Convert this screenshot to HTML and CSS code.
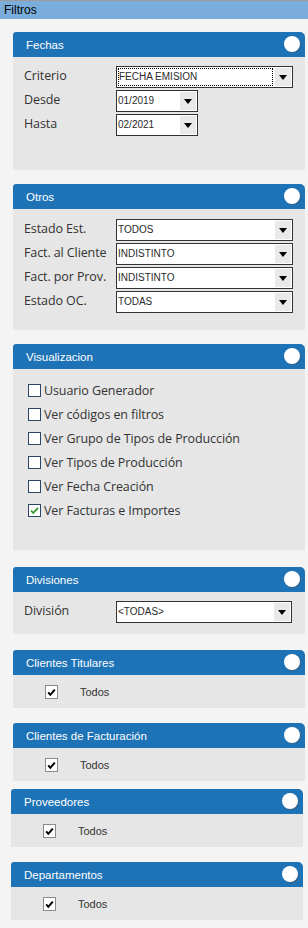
FILE: index.html
```html
<!DOCTYPE html>
<html lang="es">
<head>
<meta charset="utf-8">
<title>Filtros</title>
<link rel="stylesheet" href="styles.css">
</head>
<body>
<div class="titlebar">Filtros</div>
<div class="panel">

  <section class="box box--fechas">
    <div class="box-head"><span class="box-title">Fechas</span><span class="knob"></span></div>
    <div class="box-body body--fechas">
      <div class="row"><span class="lbl">Criterio</span><div class="sel sel--wide"><span class="sel-text sel-text--focus">FECHA EMISION</span><span class="sel-btn"><i class="tri"></i></span></div></div>
      <div class="row"><span class="lbl">Desde</span><div class="sel sel--short"><span class="sel-text">01/2019</span><span class="sel-btn"><i class="tri"></i></span></div></div>
      <div class="row"><span class="lbl">Hasta</span><div class="sel sel--short"><span class="sel-text">02/2021</span><span class="sel-btn"><i class="tri"></i></span></div></div>
    </div>
  </section>

  <section class="box box--otros">
    <div class="box-head"><span class="box-title">Otros</span><span class="knob"></span></div>
    <div class="box-body body--otros">
      <div class="row"><span class="lbl">Estado Est.</span><div class="sel sel--wide"><span class="sel-text">TODOS</span><span class="sel-btn"><i class="tri"></i></span></div></div>
      <div class="row"><span class="lbl">Fact. al Cliente</span><div class="sel sel--wide"><span class="sel-text">INDISTINTO</span><span class="sel-btn"><i class="tri"></i></span></div></div>
      <div class="row"><span class="lbl">Fact. por Prov.</span><div class="sel sel--wide"><span class="sel-text">INDISTINTO</span><span class="sel-btn"><i class="tri"></i></span></div></div>
      <div class="row"><span class="lbl">Estado OC.</span><div class="sel sel--wide"><span class="sel-text">TODAS</span><span class="sel-btn"><i class="tri"></i></span></div></div>
    </div>
  </section>

  <section class="box box--vis">
    <div class="box-head"><span class="box-title">Visualizacion</span><span class="knob"></span></div>
    <div class="box-body body--vis">
      <div class="chk-row"><span class="cb"></span><span class="chk-lbl">Usuario Generador</span></div>
      <div class="chk-row"><span class="cb"></span><span class="chk-lbl">Ver códigos en filtros</span></div>
      <div class="chk-row"><span class="cb"></span><span class="chk-lbl">Ver Grupo de Tipos de Producción</span></div>
      <div class="chk-row"><span class="cb"></span><span class="chk-lbl">Ver Tipos de Producción</span></div>
      <div class="chk-row"><span class="cb"></span><span class="chk-lbl">Ver Fecha Creación</span></div>
      <div class="chk-row"><span class="cb cb--on"><svg viewBox="0 0 11 11" width="11" height="11"><path d="M2 5.5 L4.3 8 L9 2.8" fill="none" stroke="#2e9a2e" stroke-width="1.8"/></svg></span><span class="chk-lbl">Ver Facturas e Importes</span></div>
    </div>
  </section>

  <section class="box box--div">
    <div class="box-head"><span class="box-title">Divisiones</span><span class="knob"></span></div>
    <div class="box-body body--div">
      <div class="row"><span class="lbl">División</span><div class="sel sel--div"><span class="sel-text">&lt;TODAS&gt;</span><span class="sel-btn"><i class="tri"></i></span></div></div>
    </div>
  </section>

  <section class="box box--ct">
    <div class="box-head"><span class="box-title">Clientes Titulares</span><span class="knob"></span></div>
    <div class="box-body body--todos">
      <span class="tb"><svg viewBox="0 0 11 11" width="11" height="11"><path d="M2.2 5.4 L4.3 7.8 L8.8 2.6" fill="none" stroke="#000" stroke-width="2"/></svg></span><span class="todos">Todos</span>
    </div>
  </section>

  <section class="box box--cf">
    <div class="box-head"><span class="box-title">Clientes de Facturación</span><span class="knob"></span></div>
    <div class="box-body body--todos">
      <span class="tb"><svg viewBox="0 0 11 11" width="11" height="11"><path d="M2.2 5.4 L4.3 7.8 L8.8 2.6" fill="none" stroke="#000" stroke-width="2"/></svg></span><span class="todos">Todos</span>
    </div>
  </section>

  <section class="box box--prov box--shift">
    <div class="box-head"><span class="box-title">Proveedores</span><span class="knob"></span></div>
    <div class="box-body body--todos">
      <span class="tb"><svg viewBox="0 0 11 11" width="11" height="11"><path d="M2.2 5.4 L4.3 7.8 L8.8 2.6" fill="none" stroke="#000" stroke-width="2"/></svg></span><span class="todos">Todos</span>
    </div>
  </section>

  <section class="box box--dep box--shift">
    <div class="box-head"><span class="box-title">Departamentos</span><span class="knob"></span></div>
    <div class="box-body body--todos">
      <span class="tb"><svg viewBox="0 0 11 11" width="11" height="11"><path d="M2.2 5.4 L4.3 7.8 L8.8 2.6" fill="none" stroke="#000" stroke-width="2"/></svg></span><span class="todos">Todos</span>
    </div>
  </section>

</div>
</body>
</html>
```
FILE: styles.css
```css
html, body {
  margin: 0;
  padding: 0;
  background: #f4f4f4;
}
body {
  width: 308px;
  height: 928px;
  overflow: hidden;
  font-family: "Liberation Sans", Arial, sans-serif;
}
.titlebar {
  height: 18px;
  border-top: 1px solid #9c9c9c;
  background: #7aaddb;
  color: #000;
  font-size: 12px;
  line-height: 18px;
  padding-left: 4px;
}
.panel {
  display: flex;
  flex-direction: column;
  padding-left: 13px;
  padding-right: 3px;
}
.box {
  width: 292px;
}
.box--shift {
  margin-left: -2px;
}
.box--fechas { margin-top: 13px; }
.box--otros { margin-top: 14px; }
.box--vis { margin-top: 14px; }
.box--div { margin-top: 17px; }
.box--ct { margin-top: 16px; }
.box--cf { margin-top: 15px; }
.box--prov { margin-top: 8px; }
.box--dep { margin-top: 15px; }

.box-head {
  height: 25px;
  background: #1e73b7;
  border-radius: 3px 5px 0 0;
  display: flex;
  align-items: center;
  justify-content: space-between;
  padding: 0 5px 0 13px;
}
.box-title {
  color: #fff;
  font-size: 11.5px;
  font-family: "Liberation Sans", Arial, sans-serif;
}
.knob {
  width: 16px;
  height: 16px;
  border-radius: 50%;
  background: #fff;
  box-shadow: 1px 1px 1px rgba(80, 80, 80, 0.45);
  margin-top: -1px;
}
.box-body {
  background: #e6e6e6;
  padding-left: 11px;
}
.body--fechas {
  height: 113px;
  box-sizing: border-box;
  padding-top: 9px;
  display: flex;
  flex-direction: column;
  gap: 2px;
}
.body--otros {
  height: 121px;
  box-sizing: border-box;
  padding-top: 10px;
  display: flex;
  flex-direction: column;
  gap: 2px;
}
.body--div {
  height: 42px;
  box-sizing: border-box;
  padding-top: 9px;
}
.row {
  display: grid;
  grid-template-columns: 92px auto;
  align-items: center;
  height: 22px;
}
.lbl {
  font-family: "Open Sans", sans-serif;
  font-size: 12.5px;
  color: #333;
  white-space: nowrap;
  letter-spacing: -0.1px;
  margin-top: -4px;
}
.sel {
  height: 22px;
  box-sizing: border-box;
  border: 1px solid #333;
  background: #fff;
  display: flex;
  align-items: stretch;
}
.sel--wide { width: 177px; }
.sel--short { width: 82px; }
.sel--div { width: 176px; }
.sel-text {
  flex: 1;
  font-size: 10px;
  color: #2a2a2a;
  line-height: 18px;
  padding-left: 1px;
  padding-top: 1px;
  white-space: nowrap;
  overflow: hidden;
}
.sel-text--focus {
  outline: 1px dotted #000;
  outline-offset: -1px;
  margin: 1px 1px 1px 1px;
  line-height: 16px;
  padding-top: 1px;
}
.sel-btn {
  width: 16px;
  background: #e9e9e9;
  margin: 1px;
  display: flex;
  align-items: center;
  justify-content: center;
}
.tri {
  width: 0;
  height: 0;
  border-left: 4px solid transparent;
  border-right: 4px solid transparent;
  border-top: 5px solid #000;
}

.body--vis {
  height: 181px;
  box-sizing: border-box;
  padding-top: 9px;
  padding-left: 15px;
  display: flex;
  flex-direction: column;
}
.chk-row {
  height: 24px;
  display: flex;
  align-items: center;
  gap: 3px;
}
.cb {
  width: 13px;
  height: 13px;
  box-sizing: border-box;
  border: 1px solid #2b4664;
  background: #fff;
  display: flex;
  align-items: center;
  justify-content: center;
  margin-top: 1px;
}
.chk-lbl {
  font-family: "Open Sans", sans-serif;
  font-size: 12.5px;
  color: #333;
  letter-spacing: -0.1px;
  white-space: nowrap;
}

.body--todos {
  height: 33px;
  box-sizing: border-box;
  padding-left: 32px;
  display: flex;
  align-items: center;
}
.tb {
  width: 13px;
  height: 14px;
  box-sizing: border-box;
  border: 1px solid #8a8a8a;
  background: #fff;
  display: flex;
  align-items: center;
  justify-content: center;
  margin-top: 1px;
}
.todos {
  margin-left: 22px;
  font-size: 11px;
  color: #333;
}
```
